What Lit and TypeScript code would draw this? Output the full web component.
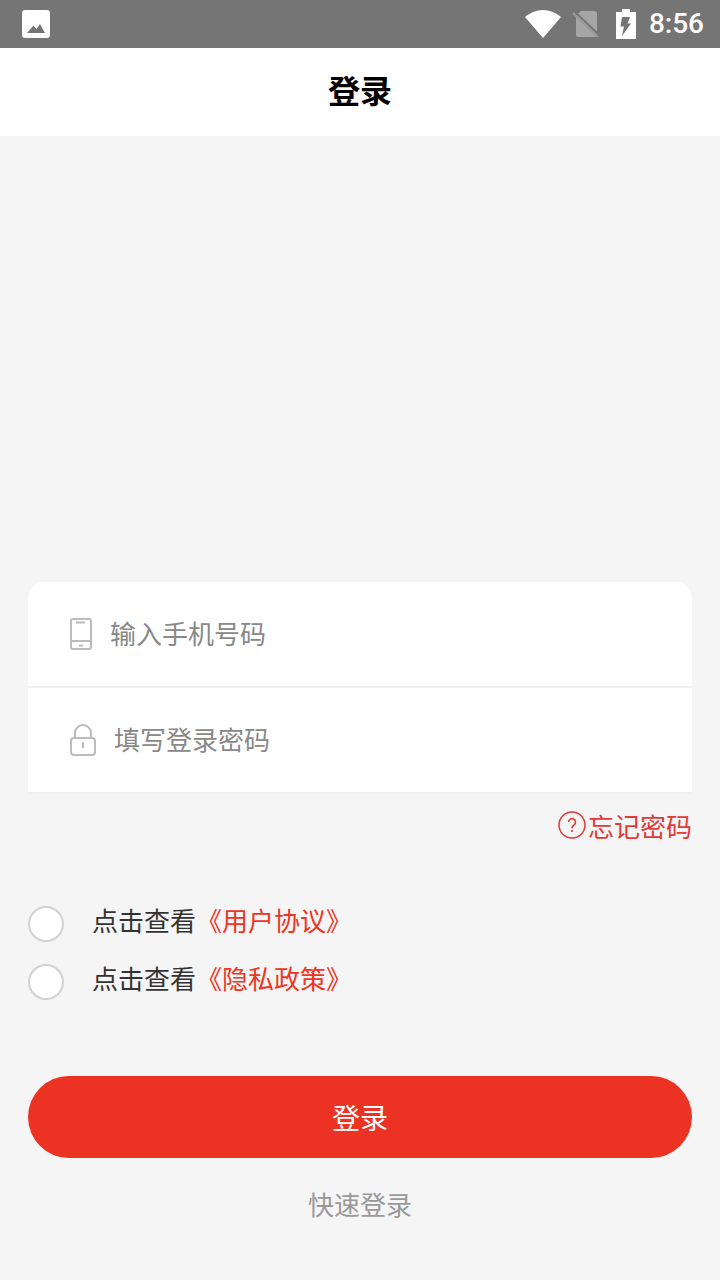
import { LitElement, html, css } from 'lit';
import { customElement } from 'lit/decorators.js';

@customElement('status-bar')
export class StatusBar extends LitElement {
  static override styles = css`
    :host {
      display: flex;
      align-items: center;
      height: 48px;
      padding: 0 16px 0 22px;
      background: #757575;
      color: #fff;
    }
    .photo {
      width: 28px;
      height: 28px;
    }
    .right {
      display: flex;
      align-items: center;
      margin-left: auto;
    }
    .wifi {
      width: 36px;
      height: 28px;
      margin-right: 12px;
    }
    .sim {
      width: 26px;
      height: 28px;
      margin-right: 17px;
    }
    .battery {
      width: 20px;
      height: 30px;
      margin-right: 13px;
    }
    .time {
      font: 500 28px/48px Roboto, sans-serif;
    }
  `;

  override render() {
    return html`
      <svg class="photo" viewBox="0 0 28 28">
        <path
          fill="#fff"
          fill-rule="evenodd"
          d="M3 0h22a3 3 0 0 1 3 3v22a3 3 0 0 1-3 3H3a3 3 0 0 1-3-3V3a3 3 0 0 1 3-3zM5 23h18l-5-9-3.500 5-3-3.500z"
        />
      </svg>
      <div class="right">
        <svg class="wifi" viewBox="0 0 36 28">
          <path fill="#fff" d="M18 28 0 7C5 3 11 0 18 0s13 3 18 7z" />
        </svg>
        <svg class="sim" viewBox="0 0 26 28">
          <path fill="#a6a6a6" d="M8 1h13a3 3 0 0 1 3 3v23H5a2 2 0 0 1-2-2V6z" />
          <path stroke="#757575" stroke-width="2" d="M2 2l23 22" />
          <path stroke="#9a9a9a" stroke-width="2" d="M0 3l25 24" />
        </svg>
        <svg class="battery" viewBox="0 0 20 30">
          <path
            fill="#fff"
            fill-rule="evenodd"
            d="M6 0h8v3h6v27H0V3h6zM6 8h8l-2.500 6.500H15L6 27l2-9.500H4.500z"
          />
        </svg>
        <span class="time">8:56</span>
      </div>
    `;
  }
}

@customElement('app-root')
export class AppRoot extends LitElement {
  static override styles = css`
    :host {
      display: flex;
      flex-direction: column;
      height: 1280px;
      background: #f5f5f5;
      font-family: 'Noto Sans CJK SC', sans-serif;
    }
    .title {
      height: 88px;
      background: #fff;
      color: #000;
      font-size: 32px;
      font-weight: 700;
      line-height: 82px;
      text-align: center;
    }
    .content {
      display: flex;
      flex-direction: column;
      padding: 446px 28px 0;
    }
    .card {
      background: #fff;
      border-radius: 16px 16px 0 0;
    }
    .row {
      display: flex;
      align-items: center;
      height: 104px;
      padding-left: 42px;
      border-bottom: 2px solid #f0f0f0;
      color: #888;
      font-size: 26px;
    }
    .row span {
      margin-bottom: 4px;
    }
    .row svg {
      flex: none;
      fill: none;
      stroke: #bbb;
      stroke-width: 2;
    }
    .phone {
      width: 22px;
      height: 32px;
      margin-right: 18px;
    }
    .lock {
      width: 26px;
      height: 32px;
      margin-right: 18px;
    }
    .forgot {
      display: flex;
      justify-content: flex-end;
      align-items: center;
      height: 62px;
      color: #e03a3a;
      font-size: 26px;
    }
    .forgot svg {
      width: 28px;
      height: 28px;
      margin-right: 2px;
    }
    .agreements {
      display: flex;
      flex-direction: column;
      gap: 22px;
      margin-top: 50px;
    }
    .agree {
      display: flex;
      align-items: center;
      height: 36px;
      color: #333;
      font-size: 26px;
    }
    .agree .label {
      margin-bottom: 10px;
    }
    .radio {
      box-sizing: border-box;
      width: 36px;
      height: 36px;
      margin-right: 28px;
      border: 2px solid #d2d2d2;
      border-radius: 50%;
      background: #fff;
    }
    .link {
      color: #ee3524;
    }
    .login {
      height: 82px;
      margin-top: 76px;
      border-radius: 41px;
      background: #ec3323;
      color: #fff;
      font-size: 28px;
      line-height: 82px;
      text-align: center;
    }
    .quick {
      margin-top: 26px;
      color: #999;
      font-size: 26px;
      line-height: 40px;
      text-align: center;
    }
  `;

  override render() {
    return html`
      <status-bar></status-bar>
      <div class="title">登录</div>
      <div class="content">
        <div class="card">
          <div class="row">
            <svg class="phone" viewBox="0 0 22 32">
              <rect x="1" y="1" width="20" height="30" rx="2" />
              <path d="M1 23h20M6 4.500h9M9 27.500h4" />
            </svg>
            <span>输入手机号码</span>
          </div>
          <div class="row">
            <svg class="lock" viewBox="0 0 26 32">
              <rect x="1" y="14" width="24" height="17" rx="3" />
              <path d="M5 14V9a8 8 0 0 1 16 0v5M13 18v6" />
            </svg>
            <span>填写登录密码</span>
          </div>
        </div>
        <div class="forgot">
          <svg viewBox="0 0 28 28">
            <circle cx="14" cy="14" r="13" fill="none" stroke="#e03a3a" stroke-width="1.500" />
            <path
              fill="none"
              stroke="#e03a3a"
              stroke-width="1.600"
              d="M10.500 11a3.500 3.500 0 1 1 5.500 3c-1.400.9-2 1.500-2 3.200"
            />
            <circle cx="14" cy="20" r="1.100" fill="#e03a3a" />
          </svg>
          <span>忘记密码</span>
        </div>
        <div class="agreements">
          <div class="agree">
            <span class="radio"></span>
            <span class="label">点击查看<span class="link">《用户协议》</span></span>
          </div>
          <div class="agree">
            <span class="radio"></span>
            <span class="label">点击查看<span class="link">《隐私政策》</span></span>
          </div>
        </div>
        <div class="login">登录</div>
        <div class="quick">快速登录</div>
      </div>
    `;
  }
}
